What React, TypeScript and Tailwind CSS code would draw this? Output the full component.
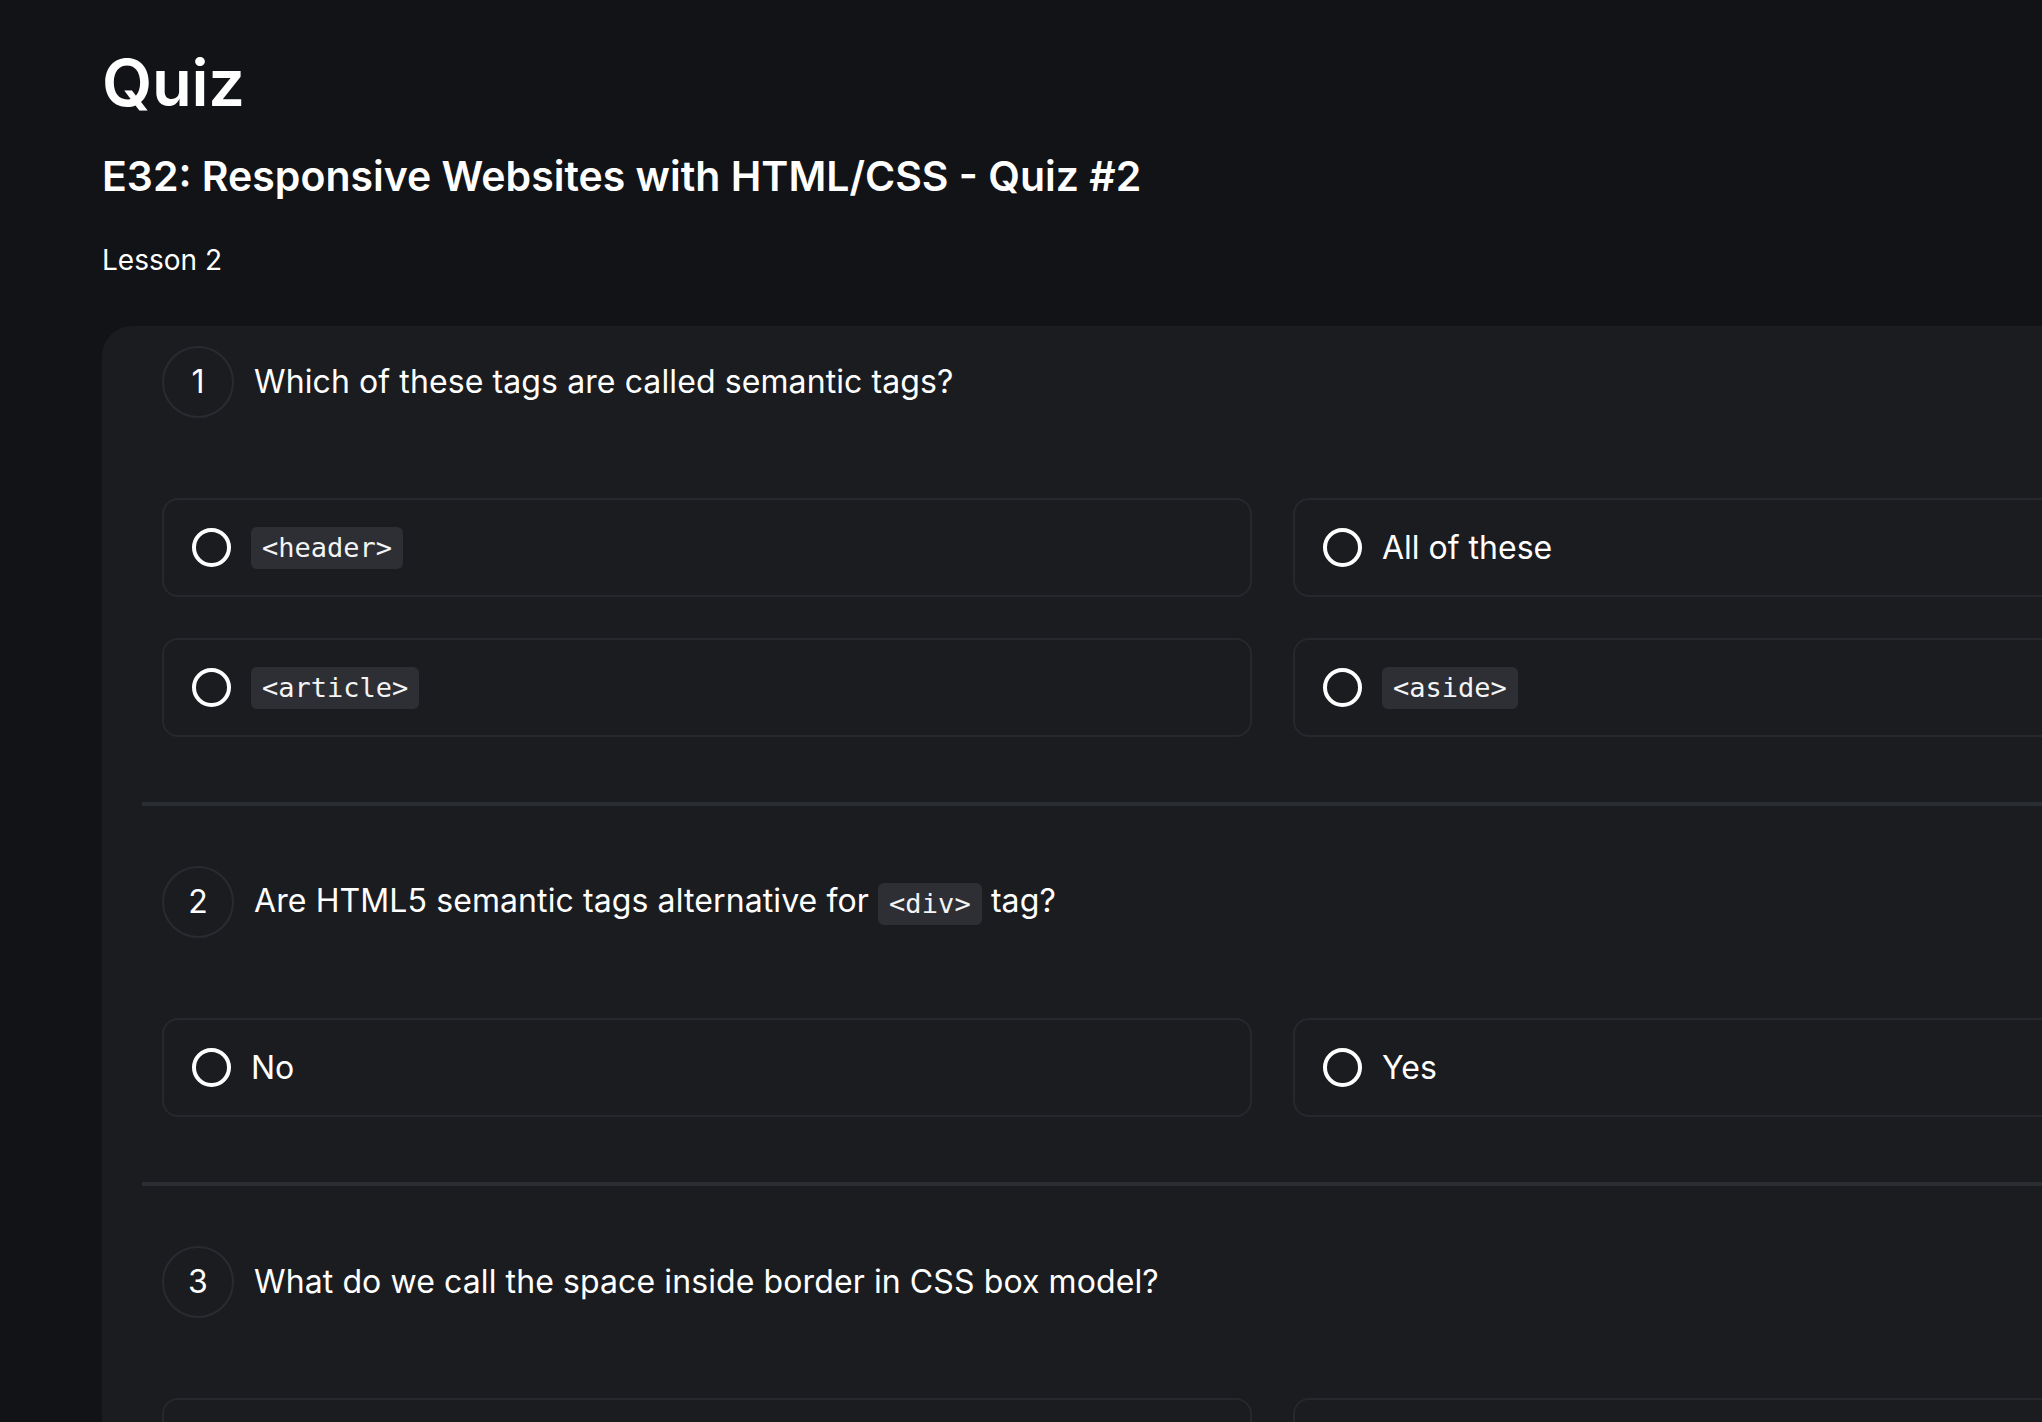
import React from "react";

type Opt = { text: string; code?: boolean };
type Q = { n: number; title: React.ReactNode; options: Opt[] };

const Code = ({ children }: { children: React.ReactNode }) => (
  <span className="inline-block h-[42px] rounded-[6px] bg-[#2e2f34] px-[11px] align-middle font-['DejaVu_Sans_Mono',monospace] text-[27px] leading-[42px] text-[#f4f4f5]">
    {children}
  </span>
);

const questions: Q[] = [
  {
    n: 1,
    title: <>Which of these tags are called semantic tags?</>,
    options: [
      { text: "<header>", code: true },
      { text: "All of these" },
      { text: "<article>", code: true },
      { text: "<aside>", code: true },
    ],
  },
  {
    n: 2,
    title: (
      <>
        Are HTML5 semantic tags alternative for <Code>&lt;div&gt;</Code> tag?
      </>
    ),
    options: [{ text: "No" }, { text: "Yes" }],
  },
  {
    n: 3,
    title: <>What do we call the space inside border in CSS box model?</>,
    options: [
      { text: "Padding" },
      { text: "Margin" },
      { text: "Border" },
      { text: "Content" },
    ],
  },
];

function Option({ o }: { o: Opt }) {
  return (
    <div className="flex h-[99px] items-center gap-5 rounded-[16px] border-2 border-[#27282d] bg-[#1b1c20] pl-[28px]">
      <div className="h-[39px] w-[39px] shrink-0 rounded-full border-[4px] border-white" />
      {o.code ? (
        <Code>{o.text}</Code>
      ) : (
        <span className="text-[32px] leading-[40px] text-white">{o.text}</span>
      )}
    </div>
  );
}

function Question({ q, first }: { q: Q; first: boolean }) {
  return (
    <section className={`px-5 pb-[65px] ${first ? "pt-0" : "pt-[60px]"}`}>
      <div className="flex items-center gap-5">
        <div className="flex h-[72px] w-[72px] shrink-0 items-center justify-center rounded-full border-2 border-[#2a2b30] text-[32px] text-white">
          {q.n}
        </div>
        <h3 className="text-[32px] leading-[44px] tracking-[0.1px] text-white">{q.title}</h3>
      </div>
      <div className="mt-[80px] grid grid-cols-[1090px_1090px] gap-[41px]">
        {q.options.map((o, i) => (
          <Option key={i} o={o} />
        ))}
      </div>
    </section>
  );
}

export default function App() {
  return (
    <div className="h-[1422px] w-[2042px] overflow-hidden bg-[#121316] font-['Inter',sans-serif] text-white">
      <div className="pl-[102px]">
        <h1 className="pt-[50px] text-[65px] font-semibold leading-[65px] tracking-[-0.3px]">Quiz</h1>
        <h2 className="mt-[36px] text-[41px] font-semibold leading-[50px]">
          E32: Responsive Websites with HTML/CSS - Quiz #2
        </h2>
        <p className="mt-[42px] text-[28px] leading-[34px]">Lesson 2</p>
        <div className="mt-[49px] w-[2340px] rounded-tl-[30px] bg-[#1b1c20] px-10 pt-5">
          {questions.map((q, i) => (
            <React.Fragment key={q.n}>
              {i > 0 && <div className="h-1 bg-[#2a2d31]" />}
              <Question q={q} first={i === 0} />
            </React.Fragment>
          ))}
        </div>
      </div>
    </div>
  );
}
